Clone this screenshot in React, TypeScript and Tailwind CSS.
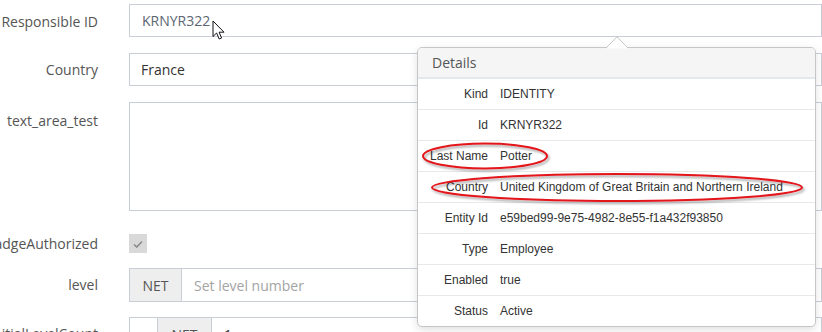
import React from "react";

const rows: [string, string][] = [
  ["Kind", "IDENTITY"],
  ["Id", "KRNYR322"],
  ["Last Name", "Potter"],
  ["Country", "United Kingdom of Great Britain and Northern Ireland"],
  ["Entity Id", "e59bed99-9e75-4982-8e55-f1a432f93850"],
  ["Type", "Employee"],
  ["Enabled", "true"],
  ["Status", "Active"],
];

function Label({ children, className = "" }: { children: React.ReactNode; className?: string }) {
  return (
    <div className={`w-[98px] shrink-0 flex justify-end whitespace-nowrap leading-[20px] ${className}`}>
      {children}
    </div>
  );
}

export default function App() {
  return (
    <div className="relative w-[822px] h-[332px] overflow-hidden bg-white font-['Open_Sans',sans-serif] text-[14px] text-[#555]">
      <div className="flex flex-col pt-[4px]">
        {/* Responsible ID */}
        <div className="flex items-center h-[33px]">
          <Label className="pt-[2px]">Responsible ID</Label>
          <div className="ml-[31px] w-[720px] h-[33px] border border-[#c8cdd8] pl-[12px] flex items-center text-[#5c6673]">
            KRNYR322
          </div>
        </div>
        {/* Country */}
        <div className="flex items-center h-[33px] mt-[16px]">
          <Label>Country</Label>
          <div className="ml-[31px] w-[720px] h-[33px] border border-[#c8cdd8] pl-[11px] flex items-center text-[#333]">
            France
          </div>
        </div>
        {/* textarea */}
        <div className="flex items-start h-[109px] mt-[16px]">
          <Label className="pt-[9px]">text_area_test</Label>
          <div className="ml-[31px] w-[720px] h-[109px] border border-[#c8cdd8]" />
        </div>
        {/* checkbox */}
        <div className="flex items-center h-[19px] mt-[23px]">
          <Label className="pt-[1px]">BadgeAuthorized</Label>
          <div className="ml-[31px] w-[18px] h-[19px] bg-[#d9d9d9] flex items-center justify-center">
            <svg width="10" height="8" viewBox="0 0 10 8">
              <polyline points="1,4.5 3.8,7 9,1.5" fill="none" stroke="#8a8a8a" strokeWidth="1.6" />
            </svg>
          </div>
        </div>
        {/* level */}
        <div className="flex items-center h-[34px] mt-[15px]">
          <Label>level</Label>
          <div className="ml-[31px] w-[720px] h-[34px] border border-[#c8cdd8] flex items-stretch">
            <div className="w-[52px] bg-[#eeeeee] border-r border-[#c8cdd8] flex items-center justify-center text-[#555]">
              NET
            </div>
            <div className="pl-[12px] flex items-center text-[#a3a3a3]">Set level number</div>
          </div>
        </div>
        {/* last row */}
        <div className="flex items-start h-[34px] mt-[15px]">
          <Label className="pt-[7px]">initialLevelCount</Label>
          <div className="ml-[31px] w-[720px] h-[34px] border border-[#c8cdd8] flex items-stretch">
            <div className="w-[28px] border-r border-[#c8cdd8]" />
            <div className="w-[54px] bg-[#eeeeee] border-r border-[#c8cdd8] flex items-center justify-center text-[#555]">
              NET
            </div>
            <div className="pl-[12px] flex items-center text-[#333]">1</div>
          </div>
        </div>
      </div>

      {/* cursor */}
      <svg className="absolute left-[212px] top-[20px]" width="14" height="21" viewBox="0 0 14 21">
        <path
          d="M1 1 L1 16.5 L4.6 13 L7.2 19 L9.6 18 L7.1 12.2 L12 12.2 Z"
          fill="white"
          stroke="#111"
          strokeWidth="1"
          strokeLinejoin="miter"
        />
      </svg>

      {/* popover */}
      <div className="absolute left-[417px] top-[47px] w-[399px] bg-white border border-[#c6c6c6] rounded-[5px] shadow-[0_3px_8px_rgba(0,0,0,0.12)] overflow-hidden">
        <div className="h-[31px] bg-[#f5f5f5] border-b-2 border-[#e4e8ec] pl-[14px] flex items-center text-[14px] text-[#555] font-['Open_Sans',sans-serif]">
          Details
        </div>
        {rows.map(([k, v], i) => (
          <div
            key={k}
            className={`flex items-center font-['Liberation_Sans',Arial,sans-serif] text-[12px] text-[#333] ${
              i < rows.length - 1 ? "h-[31px] border-b border-[#e6e8ea]" : "h-[30px]"
            }`}
          >
            <div className="w-[70px] text-right whitespace-nowrap">{k}</div>
            <div className="ml-[12px] whitespace-nowrap">{v}</div>
          </div>
        ))}
      </div>

      {/* arrow */}
      <svg className="absolute left-[605px] top-[36px]" width="24" height="13" viewBox="0 0 24 13">
        <path d="M1 12.5 L12 1 L23 12.5 Z" fill="white" stroke="none" />
        <path d="M1 12 L12 0.8 L23 12" fill="none" stroke="#c6c6c6" strokeWidth="1" />
      </svg>

      {/* red annotation ellipses */}
      <svg className="absolute left-0 top-0 pointer-events-none" width="822" height="332" viewBox="0 0 822 332">
        <defs>
          <filter id="sh" x="-10%" y="-50%" width="120%" height="200%">
            <feDropShadow dx="1.5" dy="2" stdDeviation="1.2" floodColor="#000" floodOpacity="0.35" />
          </filter>
        </defs>
        <ellipse cx="485" cy="156" rx="62" ry="12.5" fill="none" stroke="#e3141b" strokeWidth="2" filter="url(#sh)" />
        <ellipse cx="617" cy="187.5" rx="185" ry="13.5" fill="none" stroke="#e3141b" strokeWidth="2" filter="url(#sh)" />
      </svg>
    </div>
  );
}
